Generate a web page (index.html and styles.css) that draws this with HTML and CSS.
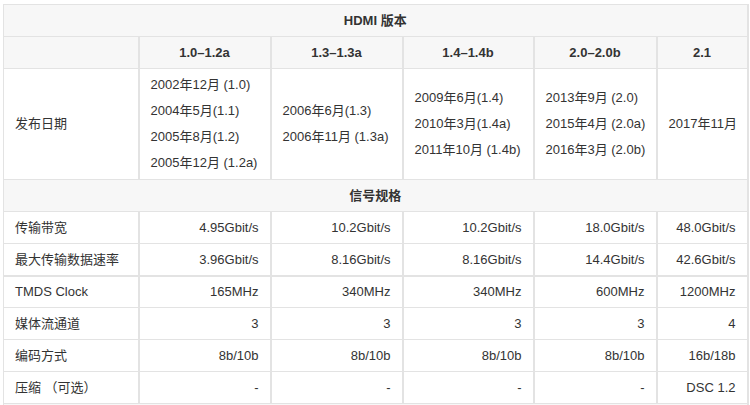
FILE: index.html
```html
<!DOCTYPE html>
<html lang="zh-CN">
<head>
<meta charset="utf-8">
<title>HDMI 版本</title>
<link rel="stylesheet" href="styles.css">
</head>
<body>
<div class="wrap">
<table class="spec">
  <colgroup>
    <col class="c1"><col class="c2"><col class="c3"><col class="c4"><col class="c5"><col class="c6">
  </colgroup>
  <tr class="head"><th colspan="6">HDMI 版本</th></tr>
  <tr class="head">
    <th></th><th>1.0–1.2a</th><th>1.3–1.3a</th><th>1.4–1.4b</th><th>2.0–2.0b</th><th>2.1</th>
  </tr>
  <tr class="dates">
    <td class="label">发布日期</td>
    <td>2002年12月 (1.0)<br>2004年5月(1.1)<br>2005年8月(1.2)<br>2005年12月 (1.2a)</td>
    <td>2006年6月(1.3)<br>2006年11月 (1.3a)</td>
    <td>2009年6月(1.4)<br>2010年3月(1.4a)<br>2011年10月 (1.4b)</td>
    <td>2013年9月 (2.0)<br>2015年4月 (2.0a)<br>2016年3月 (2.0b)</td>
    <td>2017年11月</td>
  </tr>
  <tr class="head"><th colspan="6">信号规格</th></tr>
  <tr class="data">
    <td class="label">传输带宽</td><td>4.95Gbit/s</td><td>10.2Gbit/s</td><td>10.2Gbit/s</td><td>18.0Gbit/s</td><td>48.0Gbit/s</td>
  </tr>
  <tr class="data">
    <td class="label">最大传输数据速率</td><td>3.96Gbit/s</td><td>8.16Gbit/s</td><td>8.16Gbit/s</td><td>14.4Gbit/s</td><td>42.6Gbit/s</td>
  </tr>
  <tr class="data thick">
    <td class="label">TMDS Clock</td><td>165MHz</td><td>340MHz</td><td>340MHz</td><td>600MHz</td><td>1200MHz</td>
  </tr>
  <tr class="data">
    <td class="label">媒体流通道</td><td>3</td><td>3</td><td>3</td><td>3</td><td>4</td>
  </tr>
  <tr class="data">
    <td class="label">编码方式</td><td>8b/10b</td><td>8b/10b</td><td>8b/10b</td><td>8b/10b</td><td>16b/18b</td>
  </tr>
  <tr class="data">
    <td class="label">压缩 （可选）</td><td>-</td><td>-</td><td>-</td><td>-</td><td>DSC 1.2</td>
  </tr>
  <tr class="head"><th colspan="6">&nbsp;</th></tr>
</table>
</div>
</body>
</html>
```

FILE: styles.css
```css
html, body {
  margin: 0;
  padding: 0;
  background: #fff;
}
.wrap {
  padding: 4px 0 0 3px;
}
.spec {
  border-collapse: collapse;
  table-layout: fixed;
  width: 744px;
  font-family: "Liberation Sans", Arial, "Noto Sans CJK SC", sans-serif;
  font-size: 13px;
  color: #333;
  border: 1px solid #e3e3e3;
  border-right-width: 2px;
}
.c1 { width: 135px; }
.c2 { width: 132px; }
.c3 { width: 132px; }
.c4 { width: 131px; }
.c5 { width: 123px; }
.c6 { width: 91px; }
.spec th, .spec td {
  border: 1px solid #e3e3e3;
  border-left-width: 2px;
  border-right-width: 2px;
  padding: 0 11px;
  height: 31px;
  line-height: 16px;
  white-space: nowrap;
  overflow: hidden;
  vertical-align: middle;
}
.spec tr > :first-child { border-left-width: 1px; }
.spec th {
  background: #f7f7f7;
  font-weight: bold;
  text-align: center;
}
.spec td { text-align: right; }
.spec td.label { text-align: left; }
.dates td {
  text-align: left;
  height: 110px;
  line-height: 26px;
  padding: 0 10px 0 11px;
}
.thick td { border-top-width: 2px; height: 30px; }
```
